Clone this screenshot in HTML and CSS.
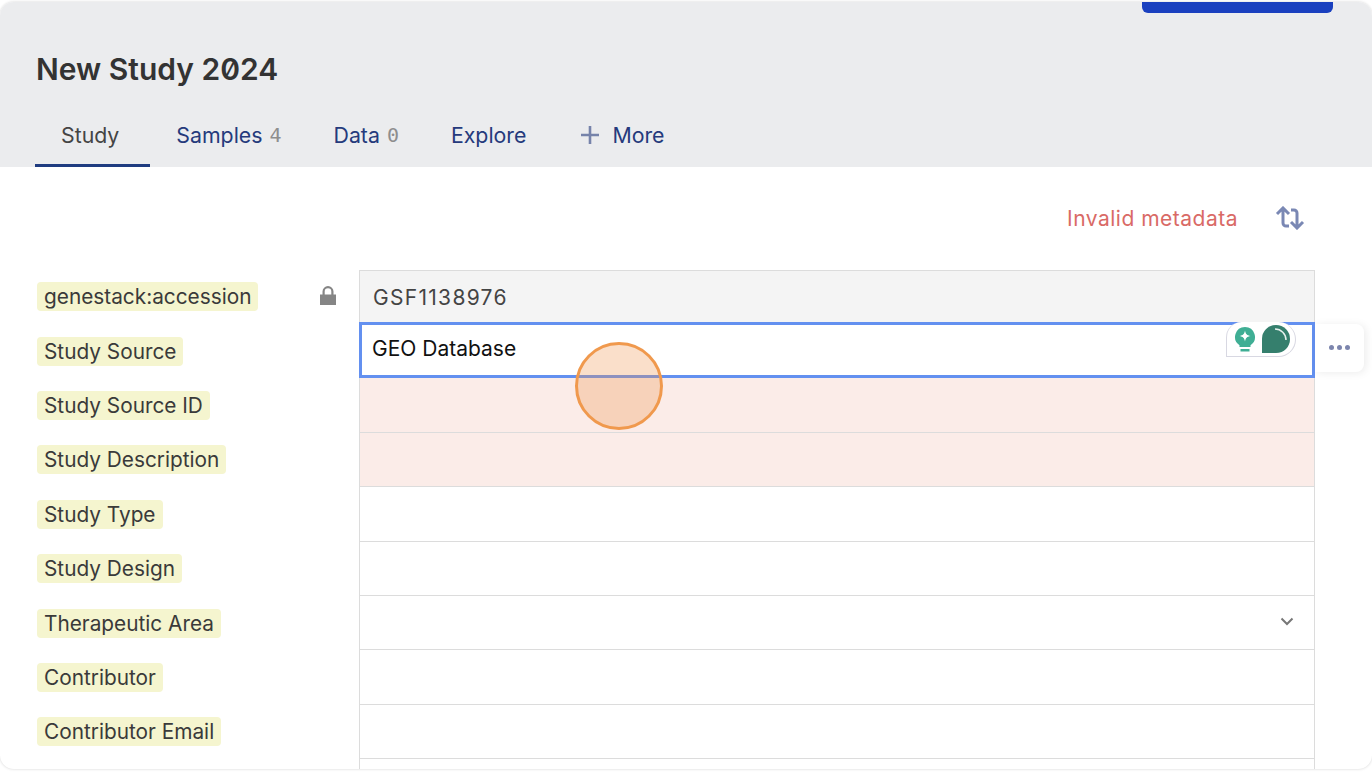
FILE: index.html
```html
<!DOCTYPE html>
<html lang="en">
<head>
<meta charset="UTF-8">
<title>New Study 2024</title>
<link rel="stylesheet" href="styles.css">
</head>
<body>
<div class="window">
	<header class="head">
		<div class="head-top"><button class="primary"></button></div>
		<h1 class="title">New Study 2024</h1>
		<nav class="tabs">
			<a class="tab active">Study</a>
			<a class="tab">Samples <span class="count">4</span></a>
			<a class="tab">Data <span class="count">0</span></a>
			<a class="tab">Explore</a>
			<a class="tab">
				<svg class="plus" width="18" height="18" viewBox="0 0 18 18"><path d="M9 0v18M0 9h18" stroke="#7683aa" stroke-width="2.6" fill="none"/></svg>
				More
			</a>
		</nav>
	</header>
	<div class="status">
		<span class="invalid">Invalid metadata</span>
		<svg class="swap" width="30" height="24" viewBox="0 0 30 24" fill="none" stroke="#7a88b4" stroke-width="3"><path d="M2 8l6-6 6 6M8 3v14a3 3 0 0 0 3 3h3"/><path d="M28 16l-6 6-6-6M22 21V7a3 3 0 0 0-3-3h-3"/></svg>
	</div>
	<div class="form">
		<div class="row">
			<div class="label"><span class="chip">genestack:accession</span>
				<svg class="lock" width="16" height="19" viewBox="0 0 16 19"><path d="M0 8.5h16V19H0z" fill="#858585"/><path d="M3.600 9V5.600a4.400 4.400 0 0 1 8.800 0V9" fill="none" stroke="#858585" stroke-width="2.2"/></svg>
			</div>
			<div class="cell locked first">GSF1138976</div>
		</div>
		<div class="row">
			<div class="label"><span class="chip">Study Source</span></div>
			<div class="cell focus">GEO Database
				<div class="assist">
					<svg width="22" height="26" viewBox="0 0 22 26"><path d="M11 1a10 10 0 0 0-5.500 18.300V21h11v-1.700A10 10 0 0 0 11 1z" fill="#3fae94"/><path d="M11 4.500c.7 3.600 1.900 4.800 5.500 5.500-3.600.7-4.800 1.900-5.500 5.500-.7-3.600-1.900-4.800-5.500-5.500 3.600-.7 4.800-1.900 5.500-5.500z" fill="#fff"/><path d="M6.500 23h9v2.500h-9z" fill="#3fae94"/></svg>
					<svg width="30" height="30" viewBox="0 0 30 30"><path d="M15 1a14 14 0 0 1 14 14c0 8-6 14-14 14H1V15A14 14 0 0 1 15 1z" fill="#357f6d"/><path d="M14 5a11 11 0 0 1 11 11" stroke="#e6f0ed" stroke-width="1.500" fill="none"/></svg>
				</div>
				<div class="more"><i></i><i></i><i></i></div>
			</div>
		</div>
		<div class="row">
			<div class="label"><span class="chip">Study Source ID</span></div>
			<div class="cell error"></div>
		</div>
		<div class="row">
			<div class="label"><span class="chip">Study Description</span></div>
			<div class="cell error"></div>
		</div>
		<div class="row">
			<div class="label"><span class="chip">Study Type</span></div>
			<div class="cell"></div>
		</div>
		<div class="row">
			<div class="label"><span class="chip">Study Design</span></div>
			<div class="cell"></div>
		</div>
		<div class="row">
			<div class="label"><span class="chip">Therapeutic Area</span></div>
			<div class="cell select">
				<svg width="14" height="9" viewBox="0 0 14 9"><path d="M1.500 1.500L7 7l5.500-5.500" fill="none" stroke="#777" stroke-width="2"/></svg>
			</div>
		</div>
		<div class="row">
			<div class="label"><span class="chip">Contributor</span></div>
			<div class="cell"></div>
		</div>
		<div class="row">
			<div class="label"><span class="chip">Contributor Email</span></div>
			<div class="cell"></div>
		</div>
		<div class="row">
			<div class="label"></div>
			<div class="cell"></div>
		</div>
	</div>
	<div class="cursor"></div>
</div>
</body>
</html>
```

FILE: styles.css
```css
html,body{
	margin:0;
	height:100%;
	overflow:hidden;
	background:#fff;
}
body{
	font-family:"Inter","Noto Sans",sans-serif;
	color:#3a3a3a;
}
.window{
	position:relative;
	margin-top:2px;
	height:767px;
	border-radius:14px;
	overflow:hidden;
	box-shadow:0 0 3px rgba(0,0,0,.18);
}
.head{
	background:#ebecee;
	height:165px;
	padding:0 39px 0 35px;
}
.head-top{
	display:flex;
	justify-content:flex-end;
	height:11px;
}
.primary{
	width:191px;
	height:11px;
	border:0;
	background:#1a40bf;
	border-radius:0 0 6px 6px;
}
.title{
	margin:34px 0 0 1px;
	font-size:30px;
	line-height:44px;
	font-weight:600;
	color:#333;
	font-feature-settings:"zero";
}
.tabs{
	display:flex;
	margin-top:24px;
}
.tab{
	display:flex;
	align-items:center;
	gap:7px;
	height:52px;
	padding:0 26px 9px;
	box-sizing:border-box;
	border-bottom:3px solid transparent;
	font-size:21.300px;
	color:#253a7c;
}
.tab.active{
	color:#444;
	padding-right:31px;
	border-bottom-color:#1f3c80;
}
.count{
	color:#8e8e8e;
	font-family:"DejaVu Sans Mono",monospace;
	font-size:20px;
}
.plus{
	margin:0 6px 0 3px;
}
.status{
	display:flex;
	justify-content:flex-end;
	align-items:center;
	gap:37px;
	height:102.600px;
	box-sizing:border-box;
	padding:0 67px 0 0;
}
.invalid{
	font-size:21px;
	letter-spacing:.5px;
	color:#d96a66;
}
.form{
	padding-left:37px;
}
.row{
	display:grid;
	grid-template-columns:322px 956px;
	height:54.400px;
}
.label{
	display:flex;
	align-items:center;
	justify-content:space-between;
	padding-right:23px;
}
.chip{
	display:flex;
	align-items:center;
	height:29px;
	padding:0 7px;
	background:#f5f5cf;
	border-radius:4px;
	font-size:20.800px;
	white-space:nowrap;
}
.lock{
	margin-top:-2px;
}
.cell{
	position:relative;
	display:flex;
	align-items:center;
	box-sizing:border-box;
	border:1px solid #dcdcdc;
	border-top:0;
	padding-left:13px;
	font-size:21px;
}
.first{
	border-top:1px solid #dcdcdc;
}
.locked{
	background:#f4f4f4;
	color:#444;
	letter-spacing:1.300px;
	padding-top:1px;
}
.error{
	background:#fbece8;
}
.select{
	justify-content:flex-end;
	padding:0 20px 2px 0;
}
.focus{
	margin-top:-2px;
	padding:0 0 2px 10px;
	height:56px;
	border:3px solid #6390f0;
	background:#fff;
	color:#111;
	z-index:1;
}
.assist{
	position:absolute;
	top:-3px;
	right:16px;
	display:flex;
	align-items:center;
	gap:5px;
	width:70px;
	height:35px;
	box-sizing:border-box;
	padding-left:7px;
	background:#fff;
	border:1px solid #d8d8e2;
	border-top:0;
	border-radius:16px 18px 18px 0;
}
.more{
	position:absolute;
	top:-1px;
	right:-52px;
	display:flex;
	align-items:center;
	justify-content:center;
	gap:3px;
	width:49px;
	height:48px;
	background:#fff;
	border-radius:0 8px 8px 0;
	box-shadow:2px 1px 8px rgba(0,0,0,.08);
}
.more i{
	width:5px;
	height:5px;
	border-radius:50%;
	background:#7c85ad;
}
.cursor{
	position:absolute;
	left:575px;
	top:340px;
	width:88px;
	height:88px;
	box-sizing:border-box;
	border:3.500px solid #f0994d;
	border-radius:50%;
	background:rgba(240,150,80,.3);
	z-index:2;
}
```
